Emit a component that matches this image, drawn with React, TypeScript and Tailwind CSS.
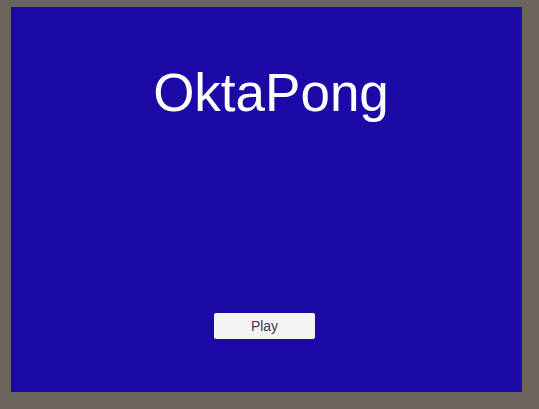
export default function App() {
  return (
    <div className="w-[539px] h-[409px] bg-[#6b645c] pl-[11px] pt-[7px] pr-[17px] pb-[17px] font-['Liberation_Sans',Arial,sans-serif]">
      <div className="flex h-full flex-col items-center bg-[#1b0aa6]">
        <h1 className="mt-[59px] pl-[9px] text-[53px] leading-[53px] text-white">OktaPong</h1>
        <button className="mt-[194px] mr-[4px] h-[26px] w-[101px] rounded-[2px] bg-[#f4f4f4] text-[14px] text-[#3c3c3c]">
          Play
        </button>
      </div>
    </div>
  );
}
